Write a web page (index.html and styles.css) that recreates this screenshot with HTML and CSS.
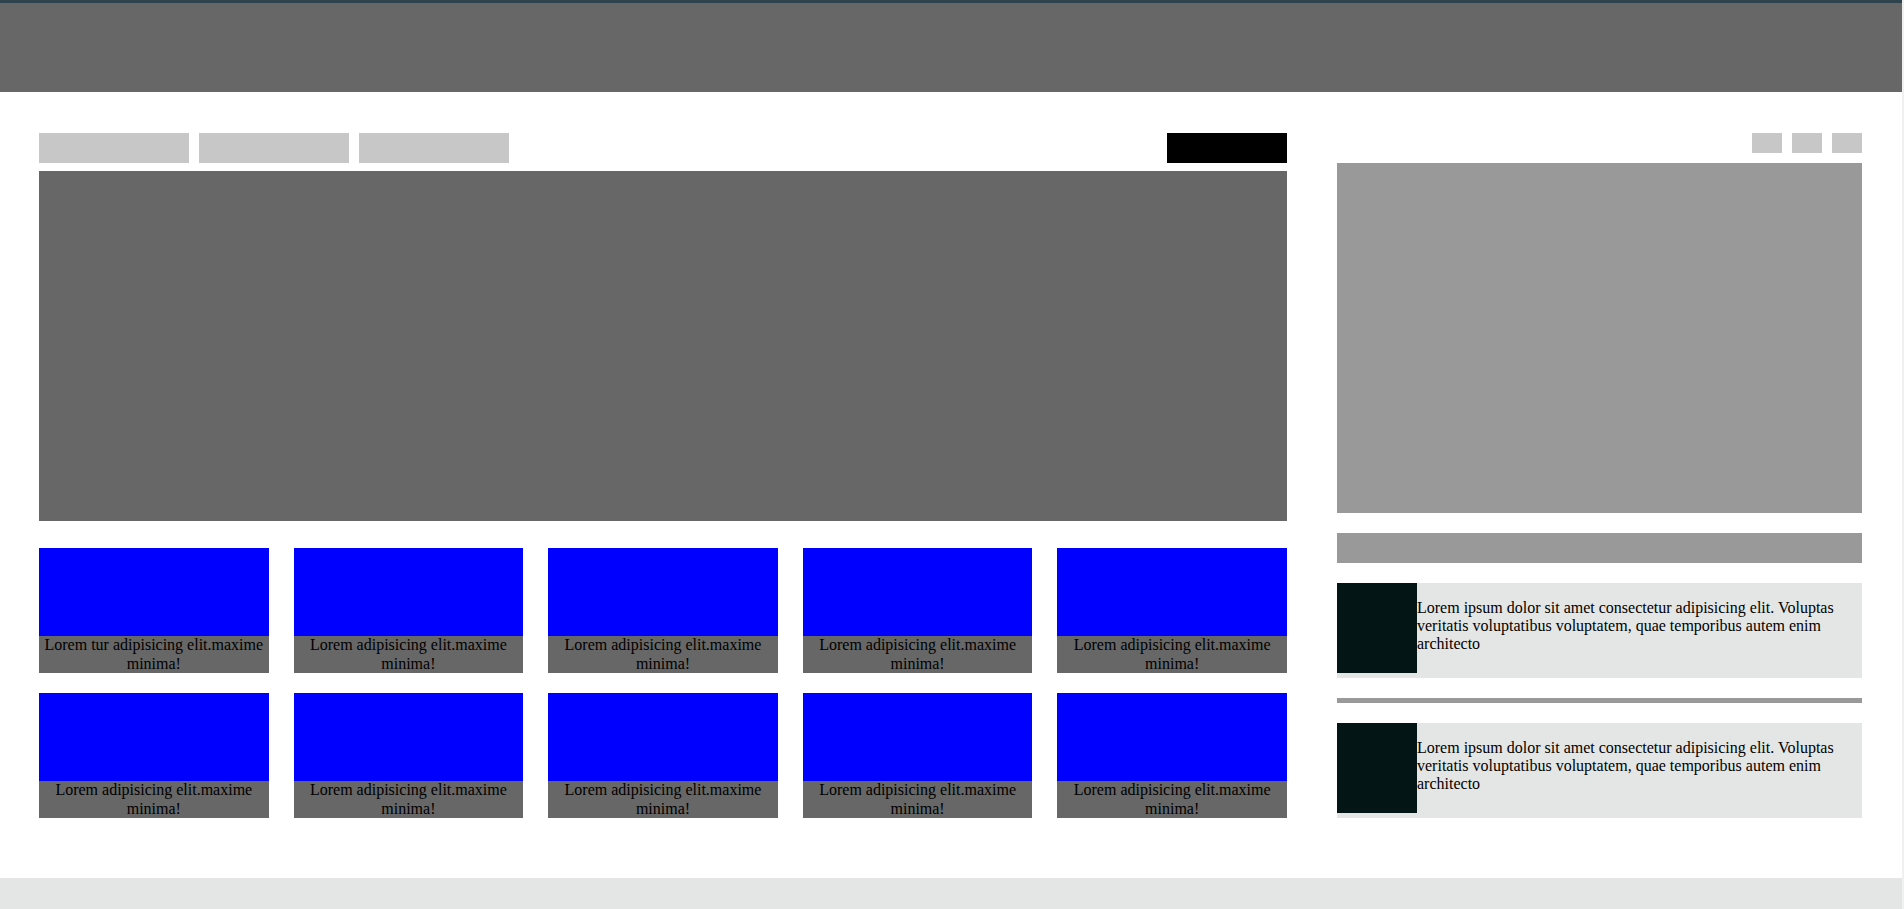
FILE: index.html
```html
<!DOCTYPE html>
<html lang="en">
<head>
<meta charset="utf-8">
<title>Layout</title>
<link rel="stylesheet" href="styles.css">
</head>
<body>
<div class="page">
  <header class="header"></header>
  <main class="main">
    <section class="left">
      <div class="tabs">
        <div class="tab"></div>
        <div class="tab"></div>
        <div class="tab"></div>
        <div class="btn"></div>
      </div>
      <div class="hero"></div>
      <div class="thumbs">
        <div class="thumb"><div class="thumb-img"></div><p class="thumb-cap">Lorem tur adipisicing elit.maxime minima!</p></div>
        <div class="thumb"><div class="thumb-img"></div><p class="thumb-cap">Lorem adipisicing elit.maxime minima!</p></div>
        <div class="thumb"><div class="thumb-img"></div><p class="thumb-cap">Lorem adipisicing elit.maxime minima!</p></div>
        <div class="thumb"><div class="thumb-img"></div><p class="thumb-cap">Lorem adipisicing elit.maxime minima!</p></div>
        <div class="thumb"><div class="thumb-img"></div><p class="thumb-cap">Lorem adipisicing elit.maxime minima!</p></div>
        <div class="thumb"><div class="thumb-img"></div><p class="thumb-cap">Lorem adipisicing elit.maxime minima!</p></div>
        <div class="thumb"><div class="thumb-img"></div><p class="thumb-cap">Lorem adipisicing elit.maxime minima!</p></div>
        <div class="thumb"><div class="thumb-img"></div><p class="thumb-cap">Lorem adipisicing elit.maxime minima!</p></div>
        <div class="thumb"><div class="thumb-img"></div><p class="thumb-cap">Lorem adipisicing elit.maxime minima!</p></div>
        <div class="thumb"><div class="thumb-img"></div><p class="thumb-cap">Lorem adipisicing elit.maxime minima!</p></div>
      </div>
    </section>
    <aside class="right">
      <div class="icons">
        <div class="sq"></div>
        <div class="sq"></div>
        <div class="sq"></div>
      </div>
      <div class="box"></div>
      <div class="bar"></div>
      <div class="card">
        <div class="card-img"></div>
        <p class="card-text">Lorem ipsum dolor sit amet consectetur adipisicing elit. Voluptas veritatis voluptatibus voluptatem, quae temporibus autem enim architecto</p>
      </div>
      <div class="divider"></div>
      <div class="card">
        <div class="card-img"></div>
        <p class="card-text">Lorem ipsum dolor sit amet consectetur adipisicing elit. Voluptas veritatis voluptatibus voluptatem, quae temporibus autem enim architecto</p>
      </div>
    </aside>
  </main>
  <footer class="footer"></footer>
</div>
</body>
</html>
```

FILE: styles.css
```css
html, body {
  margin: 0;
  padding: 0;
}
body {
  background: #f0f0f0;
  font-family: "Liberation Serif", "Times New Roman", serif;
  font-size: 16px;
  color: #000;
  overflow: hidden;
}
.page {
  width: 1902px;
  background: #fff;
}
.header {
  height: 89px;
  border-top: 3px solid #2e434d;
  background: #676767;
}
.main {
  display: flex;
  gap: 50px;
  padding: 41px 40px 60px 39px;
}
.left {
  width: 1248px;
  display: flex;
  flex-direction: column;
}
.tabs {
  display: flex;
  gap: 10px;
  height: 30px;
}
.tab {
  width: 150px;
  height: 30px;
  background: #c7c7c7;
}
.btn {
  width: 120px;
  height: 30px;
  background: #000;
  margin-left: auto;
}
.hero {
  margin-top: 8px;
  height: 350px;
  background: #676767;
}
.thumbs {
  margin-top: 27px;
  display: grid;
  grid-template-columns: repeat(5, 1fr);
  column-gap: 25px;
  row-gap: 20px;
}
.thumb {
  display: flex;
  flex-direction: column;
}
.thumb-img {
  height: 88px;
  background: #0000ff;
}
.thumb-cap {
  margin: 0;
  height: 37px;
  background: #676767;
  text-align: center;
  line-height: 18.5px;
}
.right {
  width: 525px;
  display: flex;
  flex-direction: column;
}
.icons {
  display: flex;
  justify-content: flex-end;
  gap: 10px;
  height: 20px;
}
.sq {
  width: 30px;
  height: 20px;
  background: #c7c7c7;
}
.box {
  margin-top: 10px;
  height: 350px;
  background: #999;
}
.bar {
  margin-top: 20px;
  height: 30px;
  background: #999;
}
.card {
  margin-top: 20px;
  height: 95px;
  display: flex;
  align-items: flex-start;
  background: #e4e6e5;
}
.card-img {
  flex: 0 0 80px;
  height: 90px;
  background: #031514;
}
.card-text {
  flex: 1;
  margin: 16px 0;
  line-height: 18px;
}
.divider {
  margin-top: 20px;
  height: 5px;
  background: #999;
}
.footer {
  height: 31px;
  background: #e4e6e5;
}
```
